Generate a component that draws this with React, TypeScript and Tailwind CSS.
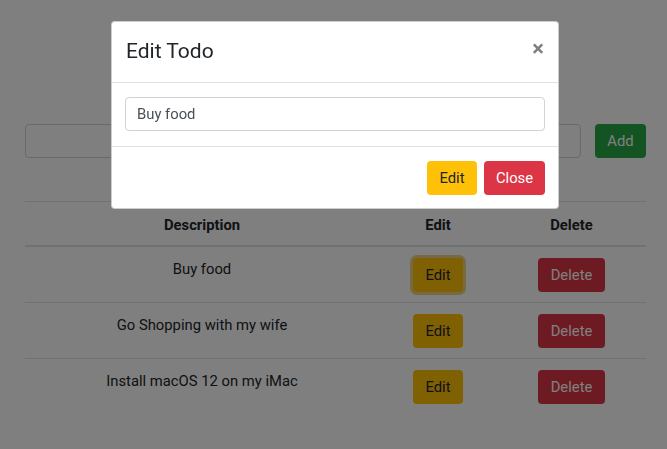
const todos = [
  { id: 1, text: 'Buy food', focused: true },
  { id: 2, text: 'Go Shopping with my wife', focused: false },
  { id: 3, text: 'Install macOS 12 on my iMac', focused: false },
];

export default function App() {
  return (
    <div className="relative min-h-screen bg-white font-['Roboto','Liberation_Sans',sans-serif] text-[14.8px] leading-[1.5] text-[#212529]">
      {/* Page behind the modal */}
      <div className="ml-[25px] w-[621px] pt-[124px]">
        <div className="flex gap-[14px]">
          <input
            type="text"
            className="h-[34px] flex-1 rounded-[4px] border border-[#ced4da] bg-white px-[11px]"
          />
          <button className="h-[34px] w-[51px] rounded-[4px] bg-[#28a745] text-white">Add</button>
        </div>

        <div className="mt-[43px] border-t border-[#dee2e6]">
          <div className="grid grid-cols-[354px_118px_149px] border-b-2 border-[#dee2e6] text-center font-bold">
            <div className="pb-[9px] pt-[12px]">Description</div>
            <div className="pb-[9px] pt-[12px]">Edit</div>
            <div className="pb-[9px] pt-[12px]">Delete</div>
          </div>
          {todos.map((todo, i) => (
            <div
              key={todo.id}
              className={`grid grid-cols-[354px_118px_149px] items-start text-center ${i > 0 ? 'border-t border-[#dee2e6]' : ''}`}
            >
              <div className="pb-[10px] pt-[11px]">{todo.text}</div>
              <div className="flex justify-center pb-[10px] pt-[11px]">
                <button
                  className={`h-[34px] w-[50px] rounded-[4px] bg-[#ffc107] text-[#212529] ${todo.focused ? 'ring-[3px] ring-[rgba(222,170,12,0.5)]' : ''}`}
                >
                  Edit
                </button>
              </div>
              <div className="flex justify-center pb-[10px] pt-[11px]">
                <button className="h-[34px] w-[67px] rounded-[4px] bg-[#dc3545] text-white">Delete</button>
              </div>
            </div>
          ))}
        </div>
      </div>

      {/* Backdrop + modal */}
      <div className="fixed inset-0 bg-black/50">
        <div className="ml-[111px] mt-[21px] w-[448px] rounded-[4px] border border-black/20 bg-white">
          <div className="flex h-[61px] items-center justify-between border-b border-[#dee2e6] px-[14px]">
            <h5 className="text-[21px] font-normal text-[#212529]">Edit Todo</h5>
            <button className="-mt-[7px] text-[22px] font-bold leading-none text-black opacity-50">×</button>
          </div>
          <div className="border-b border-[#dee2e6] px-[13px] pb-[15px] pt-[14px]">
            <input
              type="text"
              defaultValue="Buy food"
              className="h-[34px] w-full rounded-[4px] border border-[#ced4da] px-[11px] text-[#495057]"
            />
          </div>
          <div className="flex justify-end gap-[7px] px-[13px] pb-[13px] pt-[14px]">
            <button className="h-[34px] w-[50px] rounded-[4px] bg-[#ffc107] text-[#212529]">Edit</button>
            <button className="h-[34px] w-[61px] rounded-[4px] bg-[#dc3545] text-white">Close</button>
          </div>
        </div>
      </div>
    </div>
  );
}
